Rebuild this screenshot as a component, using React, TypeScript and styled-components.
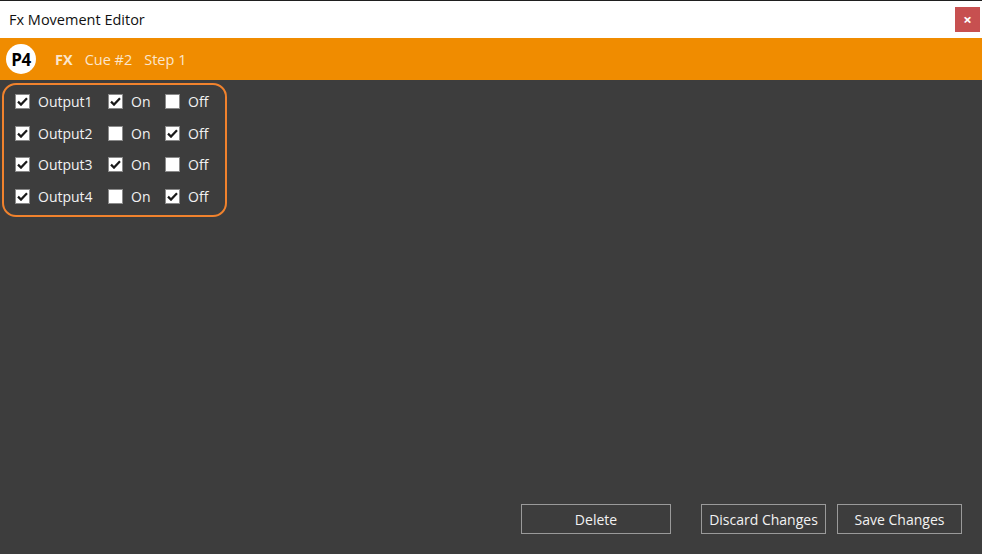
import styled, { createGlobalStyle } from 'styled-components';

const GlobalStyle = createGlobalStyle`
  html, body {
    margin: 0;
    padding: 0;
    width: 100%;
    height: 100%;
    background: #3d3d3d;
  }
  #root {
    height: 100%;
  }
  * {
    box-sizing: border-box;
  }
`;

type Output = { name: string; enabled: boolean; on: boolean };

const outputs: Output[] = [
  { name: 'Output1', enabled: true, on: true },
  { name: 'Output2', enabled: true, on: false },
  { name: 'Output3', enabled: true, on: true },
  { name: 'Output4', enabled: true, on: false },
];

function Check({ checked }: { checked: boolean }) {
  return (
    <Box>
      {checked && (
        <svg width="11" height="9" viewBox="0 0 11 9">
          <path d="M1 4.6 L4 7.6 L10 1.2" fill="none" stroke="#1a1a1a" strokeWidth="2.2" />
        </svg>
      )}
    </Box>
  );
}

function App() {
  return (
    <Window>
      <GlobalStyle />
      <TitleBar>
        <Title>Fx Movement Editor</Title>
        <CloseBtn>×</CloseBtn>
      </TitleBar>
      <Header>
        <PageBadge>P4</PageBadge>
        <HeaderStrong>FX</HeaderStrong>
        <HeaderText>Cue #2</HeaderText>
        <HeaderText>Step 1</HeaderText>
      </Header>
      <Content>
        <OutputGroup>
          {outputs.map((o) => (
            <OutputRow key={o.name}>
              <Option $width={93}>
                <Check checked={o.enabled} />
                <Label>{o.name}</Label>
              </Option>
              <Option $width={57}>
                <Check checked={o.on} />
                <Label>On</Label>
              </Option>
              <Option $width={50}>
                <Check checked={!o.on} />
                <Label>Off</Label>
              </Option>
            </OutputRow>
          ))}
        </OutputGroup>
      </Content>
      <Footer>
        <Button $width={150} $gapAfter={19}>Delete</Button>
        <Button $width={125}>Discard Changes</Button>
        <Button $width={125}>Save Changes</Button>
      </Footer>
    </Window>
  );
}

export default App;

const Window = styled.div`
  display: flex;
  flex-direction: column;
  width: 100%;
  height: 100vh;
  border-top: 1px solid #1f1f1f;
  background: #3d3d3d;
  font-family: 'Open Sans', 'Noto Sans', sans-serif;
  overflow: hidden;
`;

const TitleBar = styled.div`
  display: flex;
  align-items: center;
  justify-content: space-between;
  height: 37px;
  padding: 0 2px 0 9px;
  background: #fff;
`;

const Title = styled.div`
  font-size: 14.5px;
  color: #111;
`;

const CloseBtn = styled.div`
  display: flex;
  align-items: center;
  justify-content: center;
  width: 25px;
  height: 25px;
  background: #c75050;
  color: #fff;
  font-size: 15px;
  font-weight: 700;
  line-height: 1;
`;

const Header = styled.div`
  display: flex;
  align-items: center;
  height: 42px;
  padding: 0 6px;
  background: #f08c00;
  gap: 12px;
`;

const PageBadge = styled.div`
  display: flex;
  align-items: center;
  justify-content: center;
  width: 30px;
  height: 30px;
  margin-right: 7px;
  border-radius: 50%;
  background: #fff;
  color: #000;
  font-size: 17px;
  font-weight: 700;
  letter-spacing: -0.5px;
`;

const HeaderStrong = styled.div`
  color: #fbe6cc;
  font-size: 14.5px;
  font-weight: 700;
`;

const HeaderText = styled.div`
  color: #fbe6cc;
  font-size: 14.5px;
`;

const Content = styled.div`
  flex: 1;
  padding: 3px 2px;
`;

const OutputGroup = styled.div`
  display: inline-flex;
  flex-direction: column;
  width: 225px;
  padding: 1px 0 3px 11px;
  border: 2px solid #f0822d;
  border-radius: 14px;
`;

const OutputRow = styled.div`
  display: flex;
  align-items: center;
  height: 31.5px;
`;

const Option = styled.label<{ $width: number }>`
  display: flex;
  align-items: center;
  gap: 8px;
  width: ${(p) => p.$width}px;
`;

const Box = styled.span`
  display: flex;
  align-items: center;
  justify-content: center;
  width: 15px;
  height: 15px;
  flex-shrink: 0;
  border: 1px solid #8a8a8a;
  background: #fff;
`;

const Label = styled.span`
  color: #f2f2f2;
  font-size: 14px;
`;

const Footer = styled.div`
  display: flex;
  align-items: center;
  justify-content: flex-end;
  gap: 11px;
  height: 50px;
  padding: 0 20px 20px 0;
`;

const Button = styled.button<{ $width: number; $gapAfter?: number }>`
  flex-shrink: 0;
  width: ${(p) => p.$width}px;
  height: 30px;
  margin-right: ${(p) => p.$gapAfter ?? 0}px;
  padding: 0;
  border: 1px solid #9a9a9a;
  background: #3d3d3d;
  color: #f2f2f2;
  font-family: 'Open Sans', 'Noto Sans', sans-serif;
  font-size: 14px;
`;
